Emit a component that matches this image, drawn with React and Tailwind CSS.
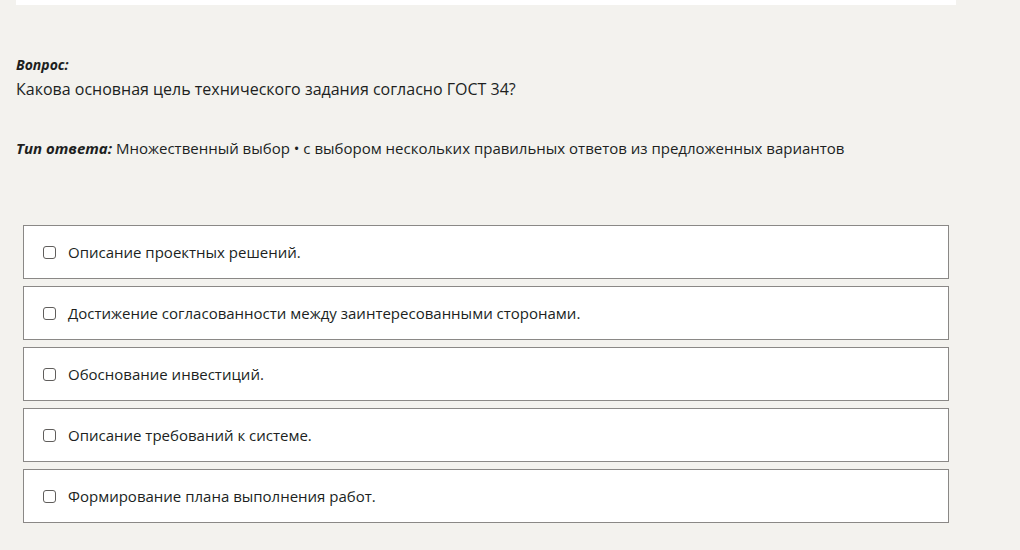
import React from 'react';

const options = [
  'Описание проектных решений.',
  'Достижение согласованности между заинтересованными сторонами.',
  'Обоснование инвестиций.',
  'Описание требований к системе.',
  'Формирование плана выполнения работ.',
];

export default function App() {
  return (
    <div className="min-h-[550px] bg-[#f3f2ee] text-[#201f1e]" style={{ fontFamily: '"Open Sans", "Noto Sans", sans-serif' }}>
      <div className="ml-[16px] w-[940px] h-[5px] bg-white" />

      <div className="px-[16px] pt-[50px]">
        <div className="text-[14px] font-bold italic leading-[20px]">Вопрос:</div>
        <div className="mt-[3px] text-[16px] leading-[22px]">Какова основная цель технического задания согласно ГОСТ 34?</div>

        <div className="mt-[38px] text-[15px] leading-[20px]">
          <span className="font-bold italic">Тип ответа:</span> Множественный выбор • с выбором нескольких правильных ответов из предложенных вариантов
        </div>
      </div>

      <div className="mt-[67px] ml-[23px] w-[926px] flex flex-col gap-[7px]">
        {options.map((text) => (
          <label key={text} className="h-[54px] bg-white border border-[#8a8886] flex items-center pl-[19px] gap-[12px] text-[15px] cursor-pointer">
            <span className="w-[13px] h-[13px] border border-[#605e5c] rounded-[3px] bg-white shrink-0" />
            <span>{text}</span>
          </label>
        ))}
      </div>
    </div>
  );
}
